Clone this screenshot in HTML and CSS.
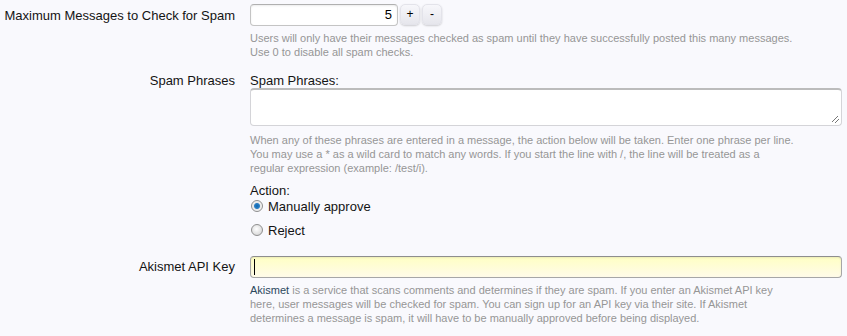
FILE: index.html
```html
<!DOCTYPE html>
<html lang="en">
<head>
<meta charset="utf-8">
<title>Spam Options</title>
<link rel="stylesheet" href="styles.css">
</head>
<body>
<div class="form">
  <dl class="unit unit-first">
    <dt class="label">Maximum Messages to Check for Spam</dt>
    <dd class="value">
      <div class="spinRow">
        <div class="textCtrl spin">5</div>
        <span class="spinBtn">+</span>
        <span class="spinBtn">-</span>
      </div>
      <p class="hint">Users will only have their messages checked as spam until they have successfully posted this many messages.<br>Use 0 to disable all spam checks.</p>
    </dd>
  </dl>

  <dl class="unit unit-phrases">
    <dt class="label">Spam Phrases</dt>
    <dd class="value">
      <div class="subLabel">Spam Phrases:</div>
      <div class="textarea"><span class="grip"></span></div>
      <p class="hint hint-ta">When any of these phrases are entered in a message, the action below will be taken. Enter one phrase per line.<br>You may use a * as a wild card to match any words. If you start the line with /, the line will be treated as a<br>regular expression (example: /test/i).</p>
      <div class="actionLabel">Action:</div>
      <ul class="radios">
        <li class="radioItem"><span class="radio checked"></span>Manually approve</li>
        <li class="radioItem"><span class="radio"></span>Reject</li>
      </ul>
    </dd>
  </dl>

  <dl class="unit unit-akismet">
    <dt class="label label-ak">Akismet API Key</dt>
    <dd class="value">
      <div class="textCtrl focused"><span class="caret"></span></div>
      <p class="hint"><span class="link">Akismet</span> is a service that scans comments and determines if they are spam. If you enter an Akismet API key<br>here, user messages will be checked for spam. You can sign up for an API key via their site. If Akismet<br>determines a message is spam, it will have to be manually approved before being displayed.</p>
    </dd>
  </dl>
</div>
</body>
</html>
```

FILE: styles.css
```css
html, body {
  margin: 0;
  padding: 0;
  background: #f9f9fd;
}
body {
  font-family: "Liberation Sans", Arial, sans-serif;
  font-size: 13px;
  color: #141414;
}
.form {
  width: 847px;
}
.unit {
  display: grid;
  grid-template-columns: 235px 1fr;
  column-gap: 15px;
  margin: 0;
}
.unit-first { padding-top: 4px; }
.unit-phrases { padding-top: 15px; }
.unit-akismet { padding-top: 18px; }
.label {
  text-align: right;
  line-height: 14px;
  padding-top: 5px;
}
.unit-phrases .label { padding-top: 0; }
.label-ak { padding-top: 4px; }
.value {
  margin: 0;
  padding-right: 5px;
}
.spinRow {
  display: flex;
  align-items: flex-start;
  gap: 2px;
}
.textCtrl {
  box-sizing: border-box;
  height: 22px;
  border: 1px solid #c4c4c4;
  border-top-color: #b0b0b0;
  border-radius: 4px;
  background: #ffffff;
  box-shadow: inset 0 1px 2px rgba(0,0,0,0.08);
}
.spin {
  width: 148px;
  text-align: right;
  padding-right: 5px;
  line-height: 20px;
  font-size: 13px;
  color: #000;
}
.spinBtn {
  box-sizing: border-box;
  width: 20px;
  height: 21px;
  border-radius: 5px;
  border: 1px solid #e3e3ea;
  background: linear-gradient(#f7f7fb, #e6e6ec);
  box-shadow: 0 1px 2px rgba(0,0,0,0.18);
  text-align: center;
  line-height: 18px;
  font-size: 12px;
  color: #000;
}
.hint {
  margin: 5px 0 0;
  font-size: 11px;
  line-height: 14px;
  color: #969696;
}
.hint-ta { margin-top: 7px; }
.subLabel {
  line-height: 14px;
}
.textarea {
  box-sizing: border-box;
  height: 38px;
  border: 1px solid #d4d4d8;
  border-top: 2px solid #bcbcbc;
  border-radius: 4px;
  background: #ffffff;
  display: flex;
  justify-content: flex-end;
  align-items: flex-end;
  padding: 0 2px 2px 0;
}
.grip {
  width: 7px;
  height: 7px;
  background: linear-gradient(135deg, transparent 42%, #777 42%, #777 50%, transparent 50%, transparent 70%, #777 70%, #777 78%, transparent 78%);
}
.actionLabel {
  margin-top: 9px;
  line-height: 14px;
}
.radios {
  list-style: none;
  margin: 0;
  padding: 0;
}
.radioItem {
  height: 16px;
  display: flex;
  align-items: center;
  gap: 5px;
  padding-left: 1px;
}
.radioItem + .radioItem {
  margin-top: 8px;
}
.radio {
  box-sizing: border-box;
  width: 12px;
  height: 12px;
  border-radius: 50%;
  border: 1px solid #8f8f8f;
  background: radial-gradient(circle at 45% 40%, #ffffff, #dcdcdc 70%, #c8c8c8);
}
.radio.checked {
  background: radial-gradient(circle at 50% 50%, #0b66b0 0, #2d7fc4 2.5px, #e8e8e8 3.5px, #f2f2f2 5px, #cfcfcf 6px);
}
.focused {
  height: 22px;
  border: 1px solid #a6a6a6;
  border-top-color: #8e8e8e;
  background: linear-gradient(#ffffc4, #fffbe9);
  display: flex;
  align-items: center;
  padding-left: 3px;
}
.caret {
  width: 1px;
  height: 16px;
  background: #000;
}
.link {
  color: #2b485c;
}
```
